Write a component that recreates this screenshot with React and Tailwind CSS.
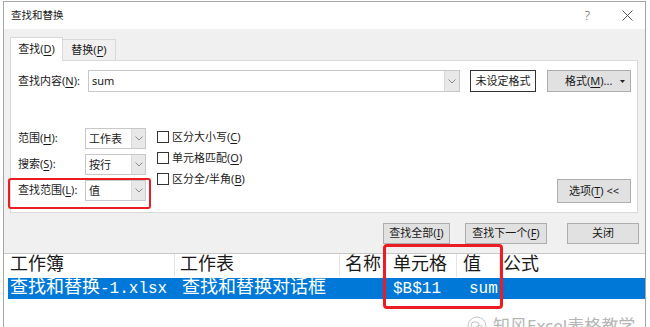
import { useState } from 'react'

const ui = "font-['Noto_Sans','Noto_Sans_CJK_SC',sans-serif]"
const sim = "font-['Liberation_Mono','Noto_Sans_CJK_SC',monospace]"

function Key({ children }) {
  return <span className="underline underline-offset-2">{children}</span>
}

function Chevron() {
  return (
    <svg width="8" height="5" viewBox="0 0 8 5" className="block">
      <path d="M0.5 0.5 L4 4 L7.5 0.5" fill="none" stroke="#8a8a8a" strokeWidth="1" />
    </svg>
  )
}

function Combo({ value, width = 'w-[61px]' }) {
  return (
    <div className={`flex h-[21px] ${width} border border-[#c8c8c8] bg-white`}>
      <div className="flex-1 pl-[3px] text-[11px] leading-[19px] text-[#1a1a1a]">{value}</div>
      <div className="flex w-[14px] items-center justify-center border-l border-[#dadada] bg-[#e8e8e8]">
        <Chevron />
      </div>
    </div>
  )
}

function Check({ children }) {
  return (
    <div className="flex h-[20px] items-center gap-[3px]">
      <div className="h-[12px] w-[12px] border border-[#333] bg-white" />
      <span className="text-[11px] text-[#1a1a1a]">{children}</span>
    </div>
  )
}

function Button({ children, className = '' }) {
  return (
    <button
      type="button"
      className={`flex h-[21px] items-center justify-center border border-[#adadad] bg-[#e1e1e1] text-[11px] text-[#1a1a1a] ${className}`}
    >
      {children}
    </button>
  )
}

function L({ children }) {
  return <span className="text-[16px]">{children}</span>
}

export default function App() {
  const [tab] = useState('find')

  return (
    <div className={`relative h-[327px] w-[650px] overflow-hidden bg-white pl-[3px] pt-[1px] ${ui}`}>
      <div className="flex h-[340px] w-[643px] flex-col border-x border-t border-[#a6a6a6]">
        <div className="flex h-[27px] items-center bg-white pl-[7px] pr-[12px]">
          <span className="text-[10.5px] text-[#1a1a1a]">查找和替换</span>
          <span className="ml-auto mr-[32px] text-[13px] font-light text-[#555]">?</span>
          <svg width="11" height="11" viewBox="0 0 11 11">
            <path d="M0.5 0.5 L10.5 10.5 M10.5 0.5 L0.5 10.5" stroke="#555" strokeWidth="1" />
          </svg>
        </div>

        <div className="flex h-[224px] flex-col bg-[#f0f0f0] pl-[6px] pt-[8px]">
          <div className="flex h-[23px] items-end">
            <div className="relative z-10 -mb-px flex h-[24px] w-[53px] items-center justify-center border-x border-t border-[#d9d9d9] bg-white text-[11px] text-[#1a1a1a]">
              查找(<Key>D</Key>)
            </div>
            <div className="flex h-[21px] w-[53px] items-center justify-center border-r border-t border-[#d9d9d9] text-[11px] text-[#1a1a1a]">
              替换(<Key>P</Key>)
            </div>
          </div>

          <div className="relative flex h-[153px] w-[628px] flex-col border border-[#d9d9d9] bg-white pl-[7px] pr-[6px] pt-[9px]">
            <div className="flex h-[22px] items-center">
              <span className="w-[70px] text-[11px] text-[#1a1a1a]">
                查找内容(<Key>N</Key>):
              </span>
              <div className="flex h-[22px] w-[372px] border border-[#c8c8c8] bg-white">
                <div className="flex-1 pl-[3px] text-[11px] leading-[19px] text-[#1a1a1a]">sum</div>
                <div className="flex w-[15px] items-center justify-center border-l border-[#dadada] bg-[#e8e8e8]">
                  <Chevron />
                </div>
              </div>
              <div className="ml-[10px] flex h-[22px] w-[66px] items-center justify-center border border-[#333] bg-white text-[11px] text-[#1a1a1a]">
                未设定格式
              </div>
              <button
                type="button"
                className="ml-[11px] flex h-[22px] w-[84px] items-center border border-[#adadad] bg-[#e1e1e1] pl-[17px] text-[11px] text-[#1a1a1a]"
              >
                格式(<Key>M</Key>)...
                <svg width="5" height="3" viewBox="0 0 5 3" className="ml-auto mr-[5px]">
                  <path d="M0 0 L5 0 L2.5 3 Z" fill="#222" />
                </svg>
              </button>
            </div>

            <div className="mt-[36px] flex">
              <div className="flex flex-col gap-[5px]">
                <div className="flex items-center">
                  <span className="w-[67px] text-[11px] text-[#1a1a1a]">
                    范围(<Key>H</Key>):
                  </span>
                  <Combo value="工作表" />
                </div>
                <div className="flex items-center">
                  <span className="w-[67px] text-[11px] text-[#1a1a1a]">
                    搜索(<Key>S</Key>):
                  </span>
                  <Combo value="按行" />
                </div>
                <div className="flex items-center">
                  <span className="w-[67px] text-[11px] text-[#1a1a1a]">
                    查找范围(<Key>L</Key>):
                  </span>
                  <Combo value="值" />
                </div>
              </div>

              <div className="ml-[11px] mt-[-1px] flex flex-col gap-[1px]">
                <Check>区分大小写(<Key>C</Key>)</Check>
                <Check>单元格匹配(<Key>O</Key>)</Check>
                <Check>区分全/半角(<Key>B</Key>)</Check>
              </div>

              <Button className="ml-auto mt-[51px] h-[24px] w-[74px]">
                选项(<Key>T</Key>) &lt;&lt;
              </Button>
            </div>

            <div className="absolute left-[-3px] top-[117px] h-[31px] w-[143px] rounded-[3px] border-[2.5px] border-[#ec1c24]" />
          </div>

          <div className="mt-[10px] flex pl-[373px]">
            <Button className="w-[67px]">
              查找全部(<Key>I</Key>)
            </Button>
            <Button className="ml-[15px] w-[82px] border-[#0078d7]">
              查找下一个(<Key>F</Key>)
            </Button>
            <Button className="ml-[20px] w-[72px]">关闭</Button>
          </div>
        </div>

        <div className={`flex flex-1 flex-col border-t border-[#c8c8c8] bg-white ${sim} text-[18px] text-[#1a1a1a]`}>
          <div className="flex h-[23px] items-center">
            <div className="h-full w-[171px] border-r border-[#e5e5e5] pl-[6px] leading-[23px]">工作簿</div>
            <div className="h-full w-[165px] border-r border-[#e5e5e5] pl-[5px] leading-[23px]">工作表</div>
            <div className="h-full w-[45px] border-r border-[#e5e5e5] pl-[5px] leading-[23px]">名称</div>
            <div className="h-full w-[72px] border-r border-[#e5e5e5] pl-[8px] leading-[23px]">单元格</div>
            <div className="h-full w-[43px] border-r border-[#e5e5e5] pl-[6px] leading-[23px]">值</div>
            <div className="h-full pl-[3px] leading-[23px]">公式</div>
          </div>
          <div className="ml-[4px] mt-[1px] flex h-[21px] items-center bg-[#0078d7] text-white">
            <div className="w-[167px] pl-[2px] leading-[21px]">
              查找和替换<L>-1.xlsx</L>
            </div>
            <div className="w-[210px] pl-[7px] leading-[21px]">查找和替换对话框</div>
            <div className="w-[77px] pl-[8px] leading-[21px]">
              <L>$B$11</L>
            </div>
            <div className="pl-[7px] leading-[21px]">
              <L>sum</L>
            </div>
          </div>
        </div>
      </div>

      <div className="absolute left-[383px] top-[244px] h-[65px] w-[120px] rounded-[4px] border-[3px] border-[#ec1c24]" />

      <div className="absolute left-[467px] top-[313px] flex items-center gap-[6px] text-[#b5b5b5]">
        <svg width="20" height="20" viewBox="0 0 20 20">
          <circle cx="10" cy="10" r="9" fill="none" stroke="#c4c4c4" strokeWidth="1" />
          <ellipse cx="8" cy="9" rx="4" ry="3.2" fill="none" stroke="#c4c4c4" strokeWidth="1" />
          <ellipse cx="12.5" cy="12" rx="3.2" ry="2.6" fill="none" stroke="#c4c4c4" strokeWidth="1" />
        </svg>
        <span className={`${ui} text-[17px]`}>知风Excel表格教学</span>
      </div>
    </div>
  )
}
